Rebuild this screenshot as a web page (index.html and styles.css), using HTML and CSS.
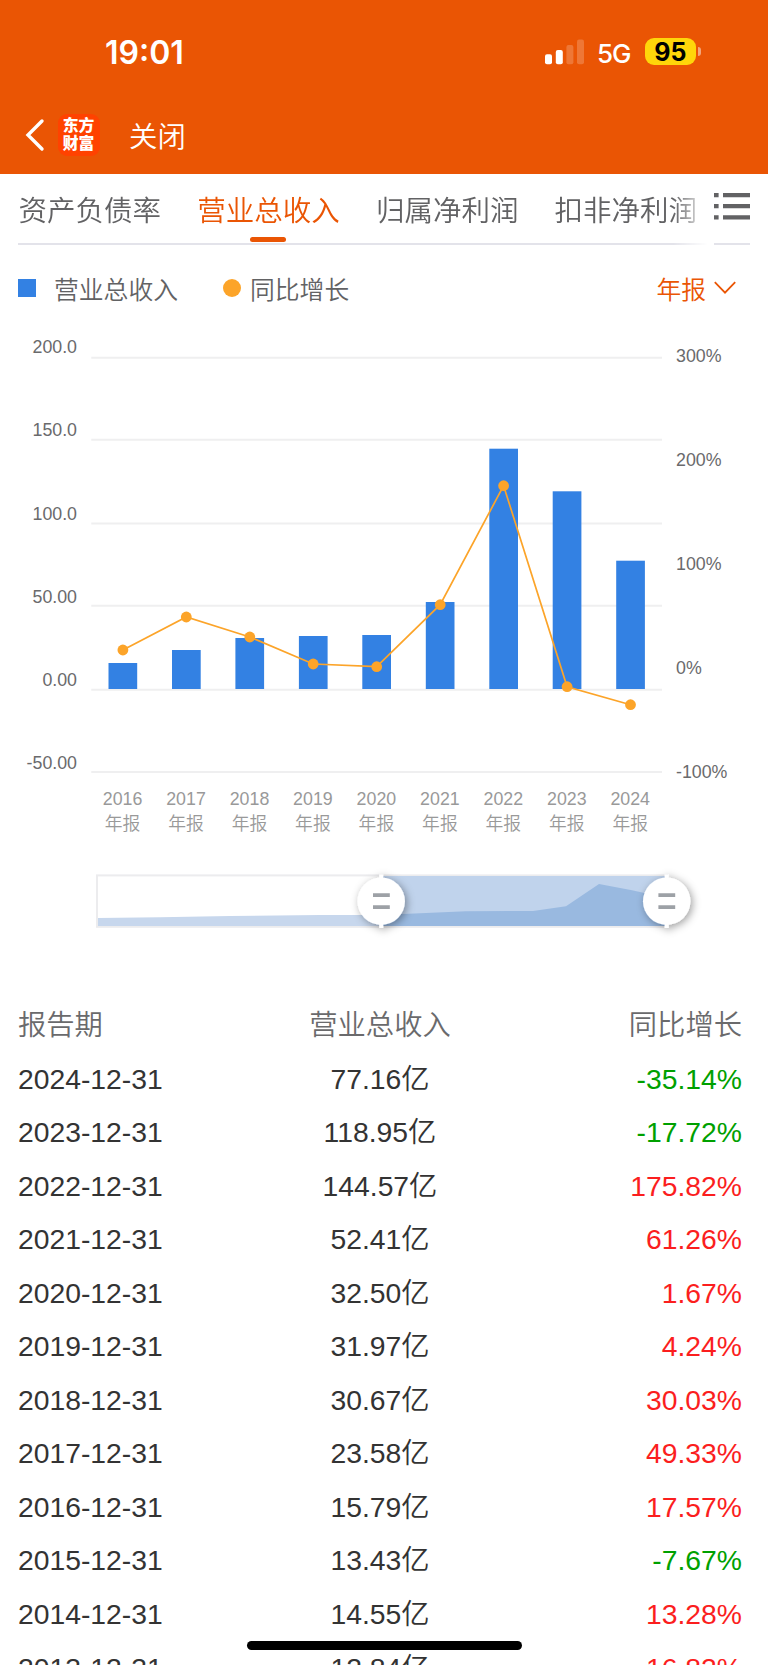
FILE: index.html
```html
<!DOCTYPE html>
<html lang="zh-CN">
<head>
  <meta charset="UTF-8">
  <meta name="viewport" content="width=device-width, initial-scale=1.0">
  <title>营业总收入</title>
  <link rel="stylesheet" href="styles.css">
</head>
<body>
  <div class="page">
    <header class="header">
      <div class="status-bar">
        <span class="time">19:01</span>
        <div class="status-icons">
          <svg class="signal" width="40" height="26" viewBox="0 0 40 26">
            <rect x="0" y="15.3" width="7" height="10" rx="2" fill="#fff"/>
            <rect x="10.8" y="11" width="7" height="14.3" rx="2" fill="#fff"/>
            <rect x="21.4" y="6" width="7" height="19.3" rx="2" fill="#fff" opacity="0.2"/>
            <rect x="32" y="0.5" width="7" height="24.8" rx="2" fill="#fff" opacity="0.2"/>
          </svg>
          <span class="network">5G</span>
          <span class="battery">95</span>
          <span class="battery-cap"></span>
        </div>
      </div>
      <nav class="nav-bar">
        <svg class="back" width="20" height="34" viewBox="0 0 20 34">
          <path d="M17 3L3 17L17 31" fill="none" stroke="#fff" stroke-width="3.4" stroke-linecap="round"/>
        </svg>
        <div class="logo"><span>东方</span><span>财富</span></div>
        <span class="close">关闭</span>
      </nav>
    </header>

    <div class="tabs">
      <div class="tab-scroll">
        <span class="tab">资产负债率</span>
        <span class="tab active">营业总收入</span>
        <span class="tab">归属净利润</span>
        <span class="tab">扣非净利润</span>
      </div>
      <div class="tab-menu">
        <svg width="36" height="28" viewBox="0 0 36 28" fill="#626264">
          <path d="M0 1h4.6v4.2H0zM9 1h27v4.2H9zM0 12h4.6v4.2H0zM9 12h27v4.2H9zM0 23.2h4.6v4.2H0zM9 23.2h27v4.2H9z"/>
        </svg>
      </div>
    </div>

    <div class="legend">
      <i class="square"></i>
      <span class="legend-bar">营业总收入</span>
      <i class="dot"></i>
      <span class="legend-line">同比增长</span>
      <div class="period">
        年报
        <svg width="22" height="14" viewBox="0 0 22 14">
          <path d="M0.8 1.2L11 11.6L21.2 1.2" fill="none" stroke="#ea5504" stroke-width="1.8"/>
        </svg>
      </div>
    </div>

    <svg class="chart" width="768" height="540" viewBox="0 320 768 540">
      <g class="grid">
        <path d="M91.3 357.7H662M91.3 439.7H662M91.3 523.5H662M91.3 605.8H662M91.3 689.8H662M91.3 772H662"/>
      </g>
      <g class="bars">
        <rect x="108.5" y="663" width="28.7" height="26"/>
        <rect x="172" y="650" width="28.7" height="39"/>
        <rect x="235.4" y="638" width="28.7" height="51"/>
        <rect x="298.9" y="636" width="28.7" height="53"/>
        <rect x="362.3" y="635" width="28.7" height="54"/>
        <rect x="425.8" y="602" width="28.7" height="87"/>
        <rect x="489.3" y="448.7" width="28.7" height="240.3"/>
        <rect x="552.7" y="491.3" width="28.7" height="197.7"/>
        <rect x="616.2" y="560.7" width="28.7" height="128.3"/>
      </g>
      <polyline class="line" points="122.9,650 186.3,617 249.8,637 313.2,664 376.7,666.7 440.2,604.7 503.6,485.7 567.1,686.7 630.5,704.7"/>
      <g class="points">
        <circle cx="122.9" cy="650" r="5.4"/>
        <circle cx="186.3" cy="617" r="5.4"/>
        <circle cx="249.8" cy="637" r="5.4"/>
        <circle cx="313.2" cy="664" r="5.4"/>
        <circle cx="376.7" cy="666.7" r="5.4"/>
        <circle cx="440.2" cy="604.7" r="5.4"/>
        <circle cx="503.6" cy="485.7" r="5.4"/>
        <circle cx="567.1" cy="686.7" r="5.4"/>
        <circle cx="630.5" cy="704.7" r="5.4"/>
      </g>
      <g class="axis-left">
        <text x="77" y="353.2">200.0</text>
        <text x="77" y="436.4">150.0</text>
        <text x="77" y="519.5">100.0</text>
        <text x="77" y="602.7">50.00</text>
        <text x="77" y="685.8">0.00</text>
        <text x="77" y="769">-50.00</text>
      </g>
      <g class="axis-right">
        <text x="676" y="362">300%</text>
        <text x="676" y="466">200%</text>
        <text x="676" y="570">100%</text>
        <text x="676" y="674">0%</text>
        <text x="676" y="778">-100%</text>
      </g>
      <g class="axis-bottom">
        <text x="122.6" y="804.7">2016</text><text x="122.6" y="830">年报</text>
        <text x="186" y="804.7">2017</text><text x="186" y="830">年报</text>
        <text x="249.5" y="804.7">2018</text><text x="249.5" y="830">年报</text>
        <text x="312.9" y="804.7">2019</text><text x="312.9" y="830">年报</text>
        <text x="376.4" y="804.7">2020</text><text x="376.4" y="830">年报</text>
        <text x="439.9" y="804.7">2021</text><text x="439.9" y="830">年报</text>
        <text x="503.3" y="804.7">2022</text><text x="503.3" y="830">年报</text>
        <text x="566.8" y="804.7">2023</text><text x="566.8" y="830">年报</text>
        <text x="630.2" y="804.7">2024</text><text x="630.2" y="830">年报</text>
      </g>
    </svg>

    <!-- range slider -->
    <svg class="slider" width="768" height="138" viewBox="0 860 768 138">
      <defs>
        <filter id="shadow" x="-50%" y="-50%" width="200%" height="200%">
          <feDropShadow dx="2" dy="2" stdDeviation="4" flood-color="#000" flood-opacity="0.38"/>
        </filter>
      </defs>
      <rect x="97" y="875.4" width="570" height="51.4" fill="#fff" stroke="#ececee" stroke-width="2"/>
      <path d="M98 926V918L160 917.3L230 916L320 915L381 915V926Z" fill="#c7d7ed"/>
      <rect x="381" y="876" width="286" height="50" fill="#c0d3ec"/>
      <path d="M381 926V915L403 914L466 911.2L533 911L566 906.3L599 884L632 890.3L667 898V926Z" fill="#99b9e0"/>
      <g filter="url(#shadow)" fill="#fff">
        <path d="M379.2 874.5h4v53.5h-4z"/>
        <circle cx="381.2" cy="901.2" r="23.7"/>
      </g>
      <g filter="url(#shadow)" fill="#fff">
        <path d="M664.7 874.5h4v53.5h-4z"/>
        <circle cx="666.7" cy="901.2" r="23.7"/>
      </g>
      <path d="M373 893.2h16.8v3.8H373zM373 905.2h16.8v3.8H373zM658.4 893.2h16.8v3.8h-16.8zM658.4 905.2h16.8v3.8h-16.8z" fill="#9da1a6"/>
    </svg>

    <div class="table">
      <div class="row head"><span>报告期</span><span>营业总收入</span><span>同比增长</span></div>
      <div class="row"><span>2024-12-31</span><span>77.16亿</span><span class="down">-35.14%</span></div>
      <div class="row"><span>2023-12-31</span><span>118.95亿</span><span class="down">-17.72%</span></div>
      <div class="row"><span>2022-12-31</span><span>144.57亿</span><span class="up">175.82%</span></div>
      <div class="row"><span>2021-12-31</span><span>52.41亿</span><span class="up">61.26%</span></div>
      <div class="row"><span>2020-12-31</span><span>32.50亿</span><span class="up">1.67%</span></div>
      <div class="row"><span>2019-12-31</span><span>31.97亿</span><span class="up">4.24%</span></div>
      <div class="row"><span>2018-12-31</span><span>30.67亿</span><span class="up">30.03%</span></div>
      <div class="row"><span>2017-12-31</span><span>23.58亿</span><span class="up">49.33%</span></div>
      <div class="row"><span>2016-12-31</span><span>15.79亿</span><span class="up">17.57%</span></div>
      <div class="row"><span>2015-12-31</span><span>13.43亿</span><span class="down">-7.67%</span></div>
      <div class="row"><span>2014-12-31</span><span>14.55亿</span><span class="up">13.28%</span></div>
      <div class="row"><span>2013-12-31</span><span>12.84亿</span><span class="up">16.82%</span></div>
    </div>
    <div class="home-indicator"></div>
  </div>
</body>
</html>
```
FILE: styles.css
```css
* {
  box-sizing: border-box;
}
body {
  margin: 0;
  background: #fff;
  font-family: "Liberation Sans", "Noto Sans CJK SC", sans-serif;
  font-weight: 350;
  color: #333;
}
.page {
  position: relative;
  width: 768px;
  height: 1665px;
  overflow: hidden;
}

/* header */
.header {
  height: 174px;
  background: #ea5504;
  color: #fff;
}
.status-bar {
  display: flex;
  justify-content: space-between;
  height: 104px;
  padding: 0 67px 0 105px;
  font-family: Inter, sans-serif;
}
.time {
  padding-top: 33px;
  font-size: 32px;
  line-height: 40px;
  font-weight: 600;
}
.status-icons {
  display: flex;
  align-items: center;
  height: 27px;
  margin-top: 38px;
}
.network {
  width: 60px;
  padding-left: 12px;
  margin-top: 3px;
  font-size: 26px;
  line-height: 27px;
  font-weight: 500;
  letter-spacing: -1px;
}
.battery {
  width: 50.5px;
  height: 27px;
  border-radius: 9px;
  background: #ffd60a;
  color: #000;
  font-size: 25px;
  line-height: 28px;
  font-weight: 700;
  text-align: center;
}
.battery-cap {
  width: 3px;
  height: 9px;
  margin-left: 2.5px;
  border-radius: 0 4px 4px 0;
  background: #f3a67c;
}
.nav-bar {
  display: flex;
  align-items: center;
  height: 61px;
  padding-left: 25px;
}
.logo {
  display: flex;
  flex-direction: column;
  align-items: center;
  width: 42px;
  height: 42px;
  margin-left: 12.5px;
  padding-top: 3.5px;
  border-radius: 9px;
  background: #ff4200;
  font-size: 15.8px;
  line-height: 17.5px;
  font-weight: 900;
}
.close {
  margin-left: 29.5px;
  font-size: 28.4px;
}

/* tabs */
.tabs {
  display: flex;
  height: 71px;
  padding: 0 18px;
  color: #626264;
}
.tab-scroll {
  display: flex;
  width: 696px;
  gap: 36.2px;
  padding-left: 0.5px;
  border-bottom: 2px solid #e3e3ea;
  overflow: hidden;
  white-space: nowrap;
  font-size: 28.5px;
  line-height: 75px;
  -webkit-mask-image: linear-gradient(to right, #000 655px, transparent 690px);
  mask-image: linear-gradient(to right, #000 655px, transparent 690px);
}
.tab.active {
  display: flex;
  flex-direction: column;
  align-items: center;
  color: #ea5504;
}
.tab.active::after {
  content: "";
  width: 36px;
  height: 5.5px;
  margin-top: -12.5px;
  border-radius: 3px;
  background: #ea5504;
}
.tab-menu {
  flex: none;
  width: 36px;
  padding-top: 18px;
  border-bottom: 2px solid #e3e3ea;
}

/* legend */
.legend {
  display: flex;
  align-items: center;
  height: 75px;
  padding: 12px 32px 1px 18px;
  color: #626264;
  font-size: 24.8px;
}
.square {
  width: 18px;
  height: 18px;
  background: #3381e3;
}
.dot {
  width: 18px;
  height: 18px;
  border-radius: 50%;
  background: #fca429;
}
.legend-bar {
  margin: 0 45px 0 18px;
}
.legend-line {
  margin-left: 9px;
}
.period {
  display: flex;
  align-items: center;
  gap: 8px;
  margin-left: auto;
  color: #ea5504;
}

/* chart */
.chart,
.slider {
  display: block;
}
.grid {
  fill: none;
  stroke: #efeff0;
  stroke-width: 2;
}
.bars {
  fill: #3381e3;
}
.line {
  fill: none;
  stroke: #fca429;
  stroke-width: 1.7;
}
.points {
  fill: #fca429;
}
.chart text {
  font-size: 17.8px;
  fill: #6a6a6c;
}
.chart .axis-left text {
  text-anchor: end;
}
.chart .axis-bottom text {
  text-anchor: middle;
  fill: #999;
}

/* table */
.table {
  padding: 1px 26px 0 18px;
  font-size: 28.3px;
}
.row {
  display: grid;
  grid-template-columns: repeat(3, 1fr);
  height: 53.55px;
  line-height: 53.55px;
}
.row span:nth-child(2) {
  text-align: center;
}
.row span:nth-child(3) {
  text-align: right;
}
.head {
  color: #6a6a6c;
}
.up {
  color: #fb1e1e;
}
.down {
  color: #00a000;
}

.home-indicator {
  position: absolute;
  left: 246.5px;
  top: 1641px;
  width: 275px;
  height: 9px;
  border-radius: 5px;
  background: #000;
}
```
